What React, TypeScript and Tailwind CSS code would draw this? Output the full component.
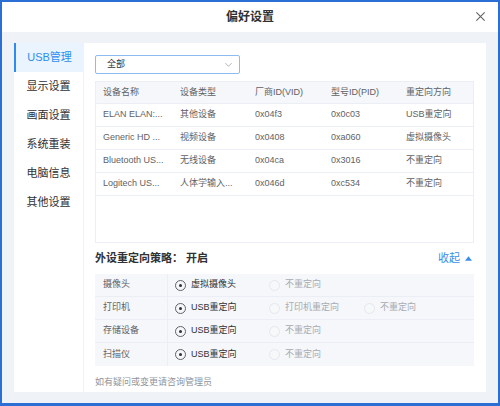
const font = { fontFamily: '"Liberation Sans", "Noto Sans CJK SC", sans-serif' };

const menu = ["USB管理", "显示设置", "画面设置", "系统重装", "电脑信息", "其他设置"];

const devices = [
  ["ELAN ELAN:...", "其他设备", "0x04f3", "0x0c03", "USB重定向"],
  ["Generic HD ...", "视频设备", "0x0408", "0xa060", "虚拟摄像头"],
  ["Bluetooth US...", "无线设备", "0x04ca", "0x3016", "不重定向"],
  ["Logitech US...", "人体学输入...", "0x046d", "0xc534", "不重定向"],
];

const policies: { name: string; options: string[] }[] = [
  { name: "摄像头", options: ["虚拟摄像头", "不重定向"] },
  { name: "打印机", options: ["USB重定向", "打印机重定向", "不重定向"] },
  { name: "存储设备", options: ["USB重定向", "不重定向"] },
  { name: "扫描仪", options: ["USB重定向", "不重定向"] },
];

function Radio({ checked }: { checked?: boolean }) {
  return checked ? (
    <span className="w-[11px] h-[11px] rounded-full border border-[#606266] flex items-center justify-center shrink-0">
      <span className="w-[3px] h-[3px] rounded-full bg-[#303133]" />
    </span>
  ) : (
    <span className="w-[11px] h-[11px] rounded-full border border-[#e4e7ed] bg-[#f7f8fa] shrink-0" />
  );
}

export default function App() {
  return (
    <div
      className="w-[500px] h-[406px] border-2 border-b-[3px] border-[#2c6fd4] bg-[#eff3f8] flex flex-col overflow-hidden"
      style={font}
    >
      {/* Title bar */}
      <div className="h-[30px] bg-white flex items-center justify-center relative shrink-0">
        <span className="text-[12px] font-bold text-[#303133]">偏好设置</span>
        <svg className="absolute right-[12px] top-[9px] w-[11px] h-[11px]" viewBox="0 0 12 12" fill="none" stroke="#606266" strokeWidth={1.2}>
          <path d="M1.5 1.5l9 9M10.5 1.5l-9 9" />
        </svg>
      </div>

      {/* Body */}
      <div className="flex-1 flex pt-[11px] pl-[12px] pr-[12px] pb-[11px] gap-px">
        {/* Sidebar */}
        <div className="w-[69px] bg-white flex flex-col">
          {menu.map((m, i) => (
            <div
              key={m}
              className={
                i === 0
                  ? "h-[29px] flex items-center justify-center border-l-2 border-[#2d8cf0] bg-[#eaf4fe] text-[#2d8cf0] text-[11px]"
                  : "h-[29px] flex items-center justify-center text-[#303133] text-[11px]"
              }
            >
              {m}
            </div>
          ))}
        </div>

        {/* Main */}
        <div className="flex-1 bg-white pt-[12px] pl-[11px] pr-[12px] flex flex-col">
          {/* Select */}
          <div className="w-[145px] h-[19px] border border-[#8cbcf2] rounded-[2px] flex items-center justify-between pl-[11px] pr-[6px]">
            <span className="text-[9px] text-[#303133]">全部</span>
            <svg className="w-[9px] h-[9px]" viewBox="0 0 10 10" fill="none" stroke="#a8abb2" strokeWidth={1}>
              <path d="M1.5 3.5L5 7l3.5-3.5" />
            </svg>
          </div>

          {/* Device table */}
          <div className="mt-[7px] h-[162px] border border-[#ebeef5] flex flex-col">
            <div className="h-[22px] bg-[#f5f7fa] grid grid-cols-[77px_75px_76px_75px_1fr] items-center pl-[7px] text-[9px] text-[#606266] border-b border-[#ebeef5]">
              <span>设备名称</span>
              <span>设备类型</span>
              <span>厂商ID(VID)</span>
              <span>型号ID(PID)</span>
              <span>重定向方向</span>
            </div>
            {devices.map((d) => (
              <div
                key={d[0]}
                className="h-[23px] grid grid-cols-[77px_75px_76px_75px_1fr] items-center pl-[7px] text-[9px] text-[#606266] border-b border-[#ebeef5]"
              >
                {d.map((c, j) => (
                  <span key={j} className="whitespace-nowrap overflow-hidden">{c}</span>
                ))}
              </div>
            ))}
          </div>

          {/* Policy header */}
          <div className="h-[31px] flex items-center justify-between">
            <span className="text-[11px] font-bold text-[#303133]">
              外设重定向策略：<span className="ml-[3px]">开启</span>
            </span>
            <span className="flex items-center gap-[5px] text-[11px] text-[#3a8ee6] pr-[2px]">
              收起
              <svg className="w-[7px] h-[5px]" viewBox="0 0 8 5" fill="#3a8ee6">
                <path d="M4 0L8 5H0z" />
              </svg>
            </span>
          </div>

          {/* Policy table */}
          <div className="bg-[#f5f7fa] flex flex-col">
            {policies.map((p, i) => (
              <div
                key={p.name}
                className={
                  i < policies.length - 1
                    ? "h-[23px] flex items-center text-[9px] text-[#606266] border-b border-[#ebeef5]"
                    : "h-[23px] flex items-center text-[9px] text-[#606266]"
                }
              >
                <span className="w-[73px] h-full flex items-center pl-[8px] border-r border-[#ebeef5]">{p.name}</span>
                <div className="flex items-center pl-[7px]">
                  {p.options.map((o, j) => (
                    <span
                      key={o}
                      className={
                        j === 0
                          ? "w-[94px] flex items-center gap-[5px] text-[#303133]"
                          : "w-[95px] flex items-center gap-[5px] text-[#a8abb2]"
                      }
                    >
                      <Radio checked={j === 0} />
                      {o}
                    </span>
                  ))}
                </div>
              </div>
            ))}
          </div>

          <div className="mt-[10px] text-[9px] text-[#909399]">如有疑问或变更请咨询管理员</div>
        </div>
      </div>
    </div>
  );
}
